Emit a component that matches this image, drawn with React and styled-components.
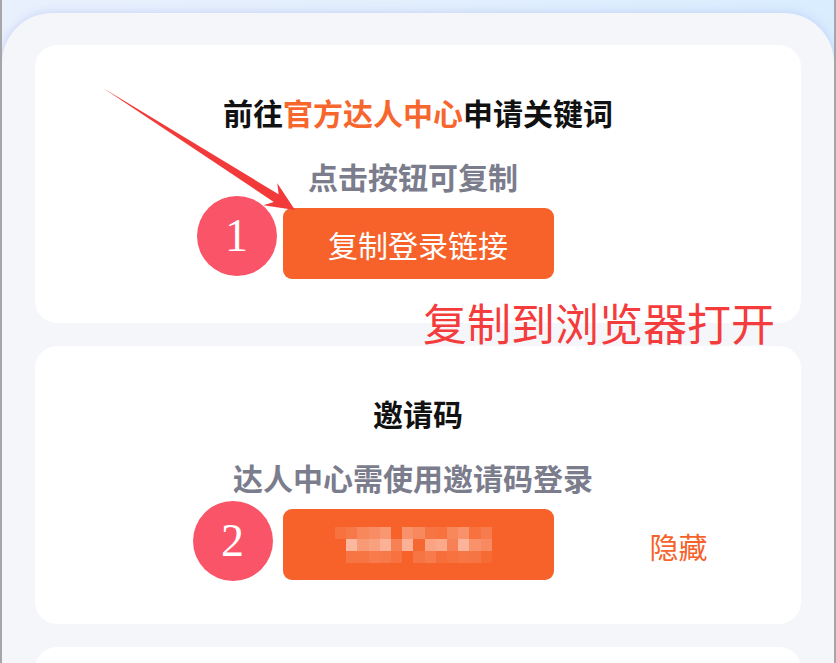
import React from 'react';
import styled, { createGlobalStyle } from 'styled-components';

const GlobalStyle = createGlobalStyle`
  html, body {
    margin: 0;
    padding: 0;
    background: #ffffff;
  }
  body {
    font-family: "Noto Sans CJK SC", "Noto Sans", sans-serif;
  }
`;

const Frame = styled.div`
  position: relative;
  height: 663px;
  overflow: hidden;
  border-left: 2px solid #a6a6a8;
  border-right: 2px solid #a6a6a8;
  background: linear-gradient(90deg, #e9f0fd 0%, #e3effd 50%, #d9edfe 100%);
  padding-top: 13px;
  box-sizing: border-box;
`;

const Panel = styled.div`
  background: #f5f6fa;
  border-radius: 50px 50px 0 0;
  box-shadow: 0 0 10px rgba(170, 182, 240, 0.55);
  padding: 32px 33px 0 33px;
  display: flex;
  flex-direction: column;
  gap: 23px;
  min-height: 700px;
`;

const Card = styled.section`
  background: #ffffff;
  border-radius: 22px;
  padding: 46px 0 44px;
  display: flex;
  flex-direction: column;
  align-items: center;
`;

const Title = styled.h2`
  margin: 0;
  font-size: 30px;
  line-height: 42px;
  font-weight: 700;
  color: #111111;
`;

const Accent = styled.span`
  color: #f7672d;
`;

const Hint = styled.p`
  margin: 22px 10px 0 0;
  font-size: 30px;
  line-height: 42px;
  font-weight: 700;
  color: #7b7c8c;
`;

const ActionRow = styled.div`
  position: relative;
  margin-top: 11px;
`;

const ActionButton = styled.button`
  width: 271px;
  height: 71px;
  border: none;
  border-radius: 9px;
  background: #f6622a;
  color: #ffffff;
  font-family: "Noto Sans CJK SC", "Noto Sans", sans-serif;
  font-size: 30px;
  font-weight: 400;
  display: flex;
  align-items: center;
  justify-content: center;
  padding: 0;
  cursor: pointer;
`;

const StepBadge = styled.span`
  position: absolute;
  left: ${({ $left }) => $left}px;
  top: ${({ $top }) => $top}px;
  width: 80px;
  height: 80px;
  border-radius: 50%;
  background: #fa5468;
  color: #ffffff;
  font-family: "Liberation Serif", "DejaVu Serif", serif;
  font-size: 46px;
  line-height: 80px;
  text-align: center;
`;

const HideLink = styled.span`
  position: absolute;
  left: 367px;
  top: 16px;
  font-size: 29px;
  line-height: 42px;
  color: #f6622a;
  white-space: nowrap;
  cursor: pointer;
`;

const Mosaic = styled.div`
  display: grid;
  grid-template-columns: repeat(15, 11.2px);
  grid-template-rows: repeat(3, 12px);
  margin-left: 2px;
`;

const MosaicCell = styled.span`
  background: rgba(255, 255, 255, ${({ $a }) => $a});
`;

const Annotation = styled.div`
  position: absolute;
  left: 421px;
  top: 292px;
  font-size: 44px;
  line-height: 60px;
  color: #f43c3c;
  white-space: nowrap;
`;

const ArrowLayer = styled.svg`
  position: absolute;
  left: -2px;
  top: 0;
  pointer-events: none;
`;

const mosaic = [
  [0.1, 0.14, 0.24, 0.28, 0.34, 0, 0.3, 0.25, 0.12, 0.1, 0.24, 0.3, 0.1, 0.16, 0],
  [0, 0.55, 0.36, 0.4, 0.5, 0.2, 0.5, 0.04, 0.42, 0.46, 0.2, 0.52, 0.3, 0.26, 0],
  [0, 0.12, 0.12, 0.16, 0.15, 0.1, 0, 0.12, 0.16, 0.08, 0.1, 0.13, 0.12, 0.05, 0],
];

export default function App() {
  return (
    <>
      <GlobalStyle />
      <Frame>
        <Panel>
          <Card>
            <Title>
              前往<Accent>官方达人中心</Accent>申请关键词
            </Title>
            <Hint>点击按钮可复制</Hint>
            <ActionRow>
              <StepBadge $left={-86} $top={-12}>1</StepBadge>
              <ActionButton>复制登录链接</ActionButton>
            </ActionRow>
          </Card>

          <Card>
            <Title>邀请码</Title>
            <Hint>达人中心需使用邀请码登录</Hint>
            <ActionRow>
              <StepBadge $left={-90} $top={-8}>2</StepBadge>
              <ActionButton aria-label="邀请码">
                <Mosaic>
                  {mosaic.flatMap((row, r) =>
                    row.map((a, c) => <MosaicCell key={`${r}-${c}`} $a={a} />)
                  )}
                </Mosaic>
              </ActionButton>
              <HideLink>隐藏</HideLink>
            </ActionRow>
          </Card>

          <Card />
        </Panel>

        <Annotation>复制到浏览器打开</Annotation>

        <ArrowLayer width="836" height="663" viewBox="0 0 836 663">
          <polygon
            points="103,88 278.6,194.3 277.3,183.3 295,210 263.3,205.3 273.8,201.9"
            fill="#f23a3a"
          />
        </ArrowLayer>
      </Frame>
    </>
  );
}
